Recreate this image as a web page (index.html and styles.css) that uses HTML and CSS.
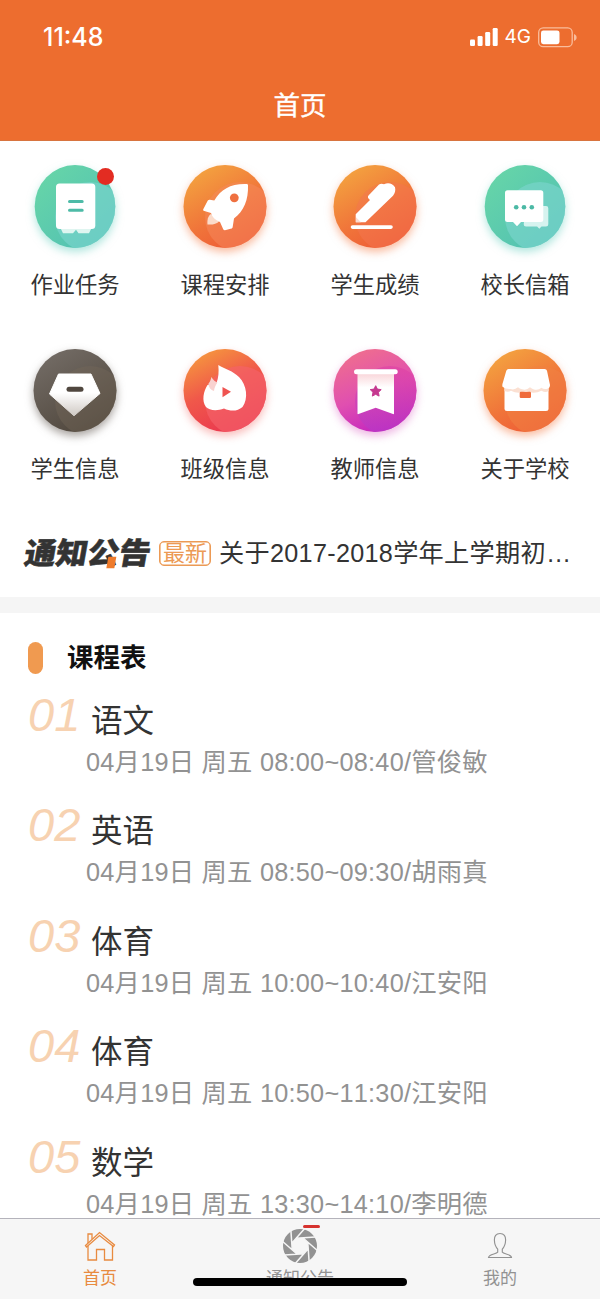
FILE: index.html
```html
<!DOCTYPE html>
<html lang="zh-CN">
<head>
<meta charset="utf-8">
<title>首页</title>
<link rel="stylesheet" href="styles.css">
</head>
<body>
<svg class="defs" width="0" height="0" aria-hidden="true">
  <defs>
    <linearGradient id="green" x1="0" y1="0" x2="1" y2="1"><stop offset=".1" stop-color="#66d5a8"/><stop offset="1" stop-color="#4fbdb5"/></linearGradient>
    <linearGradient id="orange" x1=".1" y1="0" x2=".7" y2="1"><stop offset="0" stop-color="#f4a940"/><stop offset=".6" stop-color="#f0743a"/><stop offset="1" stop-color="#ee5a35"/></linearGradient>
    <linearGradient id="brown" x1="0" y1="0" x2=".6" y2="1"><stop offset="0" stop-color="#77706a"/><stop offset="1" stop-color="#50473d"/></linearGradient>
    <linearGradient id="red" x1=".1" y1="0" x2=".6" y2="1"><stop offset="0" stop-color="#f6a03c"/><stop offset=".5" stop-color="#f0584a"/><stop offset="1" stop-color="#ea3650"/></linearGradient>
    <linearGradient id="pink" x1=".2" y1="0" x2=".6" y2="1"><stop offset="0" stop-color="#f0708c"/><stop offset=".55" stop-color="#e04fb0"/><stop offset="1" stop-color="#c223c0"/></linearGradient>
    <linearGradient id="violet" x1=".7" y1="0" x2=".5" y2="1"><stop offset="0" stop-color="#e040a4"/><stop offset="1" stop-color="#b43cc8"/></linearGradient>
    <linearGradient id="fade" x1="0" y1="0" x2="0" y2="1"><stop offset=".45" stop-color="#fff"/><stop offset="1" stop-color="#cfc9c4"/></linearGradient>
    <linearGradient id="shade" x1="0" y1="0" x2="0" y2="1"><stop offset="0" stop-color="#f9d4d8"/><stop offset=".35" stop-color="#fff"/></linearGradient>
    <clipPath id="disc"><circle cx="42" cy="41.5" r="41.5"/></clipPath>
    <clipPath id="disc-green"><ellipse cx="42" cy="41.5" rx="40.3" ry="41.5"/></clipPath>
  </defs>
</svg>
<div class="screen">
  <header class="header">
    <div class="status">
      <span class="time">11:48</span>
      <span class="signals">
        <svg width="28" height="18" viewBox="0 0 28 18" fill="#fff"><rect x="0" y="11.5" width="5" height="6.5" rx="1.2"/><rect x="7.6" y="8" width="5" height="10" rx="1.2"/><rect x="15.2" y="4" width="5" height="14" rx="1.2"/><rect x="22.7" y="0" width="5" height="18" rx="1.2"/></svg>
        <span class="network">4G</span>
        <svg width="39" height="21" viewBox="0 0 39 21"><rect x=".7" y=".9" width="33.5" height="18.8" rx="4.5" fill="none" stroke="#f9bd9c" stroke-width="1.3"/><rect x="3" y="3.4" width="18.5" height="13.8" rx="2.4" fill="#fff"/><path d="M36 7v7c2-.8 2.600-2 2.600-3.500S38 7.800 36 7z" fill="#f9bd9c"/></svg>
      </span>
    </div>
    <h1 class="title">首页</h1>
  </header>
  <main class="content">
    <nav class="grid">
      <a class="entry green">
        <svg class="icon" viewBox="0 0 84 84"><g clip-path="url(#disc-green)"><rect width="84" height="84" fill="url(#green)"/><circle cx="57" cy="52" r="35" fill="#7dd5cf" opacity=".6"/></g><path d="M27 62l3 6.300h10l3-3.500 2.500 3.500H56l3-6.300z" fill="#dff5f0"/><rect x="23" y="18.500" width="39.300" height="45.500" rx="3.500" fill="#fff"/><path d="M36.500 36.400h12.700M36.500 45.300h12.700" stroke="#4dbba7" stroke-width="3" stroke-linecap="round"/></svg>
        <i class="dot"></i><span>作业任务</span>
      </a>
      <a class="entry orange">
        <svg class="icon" viewBox="0 0 84 84"><g clip-path="url(#disc)"><rect width="84" height="84" fill="url(#orange)"/><circle cx="57" cy="52" r="35" fill="#f58a5d" opacity=".5"/></g><path d="M28 49c-3 2-4 6-3.500 10.500 5 .5 9-.5 12-3.500z" fill="#fbdccb"/><path d="M65 20C65.500 35 61 46 51 53.500L49.600 62.500q-.6 1.200-2 1.200L42 65.300q-1.500 0-2-1.500L37 57C32 55 29 52 28 48L20.500 45.700q-.8-.7 0-1.900l4.300-8.200q.8-1 2-.8l4.500.7C38 24 48 18.500 63.500 19q1.400 0 1.500 1z" fill="#fff"/><circle cx="51.300" cy="32.800" r="4.400" fill="#ef7040"/></svg>
        <span>课程安排</span>
      </a>
      <a class="entry orange">
        <svg class="icon" viewBox="0 0 84 84"><g clip-path="url(#disc)"><rect width="84" height="84" fill="url(#orange)"/><circle cx="57" cy="52" r="35" fill="#f4764f" opacity=".5"/></g><path d="M22.700 57.300v-8L37 35l-1.500-1.500c-.8-.8-.8-2 0-3L46 19.600c1.500-1.200 3.500-1.200 5-.3 4-2 8.500-1 11 3 .8 3 0 6-2 8.500L32.500 57.300z" fill="#fff"/><path d="M23 57.300v-5l5 5z" fill="#fbdcd0"/><path d="M19.500 62.100h38.500" stroke="#fff" stroke-width="3.600" stroke-linecap="round"/></svg>
        <span>学生成绩</span>
      </a>
      <a class="entry green">
        <svg class="icon" viewBox="0 0 84 84"><g clip-path="url(#disc-green)"><rect width="84" height="84" fill="url(#green)"/><circle cx="57" cy="52" r="35" fill="#7dd5cf" opacity=".6"/></g><path d="M43 41h20q2.300 0 2.300 2.300v15.900q0 2.300-2.300 2.300h-4.500l-2.200 2.200-2.200-2.200H43q-2.300 0-2.300-2.300z" fill="#d6f3ef"/><path d="M24.500 25.300h33.300q2.500 0 2.500 2.500v26.700q0 2.500-2.500 2.500H38l-4 4.200-4-4.200h-5.500q-2.500 0-2.500-2.500V27.800q0-2.500 2.500-2.500z" fill="#fff"/><g fill="#4bb9a5"><circle cx="33.200" cy="42.200" r="2.300"/><circle cx="41" cy="42.200" r="2.300"/><circle cx="48.800" cy="42.200" r="2.300"/></g></svg>
        <span>校长信箱</span>
      </a>
      <a class="entry brown">
        <svg class="icon" viewBox="0 0 84 84"><g clip-path="url(#disc)"><rect width="84" height="84" fill="url(#brown)"/><circle cx="57" cy="52" r="35" fill="#766a5b" opacity=".4"/></g><path d="M25.500 25h32.500l9 19.500L41 66.800 16.500 45z" fill="url(#fade)" stroke="url(#fade)" stroke-linejoin="round"/><path d="M36 40.300h12" stroke="#50473f" stroke-width="5" stroke-linecap="round"/></svg>
        <span>学生信息</span>
      </a>
      <a class="entry red">
        <svg class="icon" viewBox="0 0 84 84"><g clip-path="url(#disc)"><rect width="84" height="84" fill="url(#red)"/><circle cx="57" cy="52" r="35" fill="#f4626a" opacity=".65"/></g><path d="M35.300 16C42 20 50 22 56 28c8 8 9.500 22 3.500 30-5 4.500-12 4.500-18.500 1.500-8 3-15 1.500-18-1.500-4.500-6-2.500-16 1.500-22l9-2c2-5 2.500-11 1.800-18z" fill="#fff"/><path d="M28.300 28c2 3 4 5 6.200 5.500-2 2.500-3 5-3.500 8.500-3-1-5.500-3.500-5.500-7.500 1.800-2.200 2.500-4 2.800-6.500z" fill="#f9d2d0"/><path d="M39.500 38v10.300l8.500-5.500z" fill="#ef5350"/></svg>
        <span>班级信息</span>
      </a>
      <a class="entry pink">
        <svg class="icon" viewBox="0 0 84 84"><g clip-path="url(#disc)"><rect width="84" height="84" fill="url(#pink)"/><circle cx="57" cy="52" r="35" fill="url(#violet)" opacity=".6"/></g><path d="M24.500 24H61v40.500q0 1-1 .6l-17.300-6.300-17.200 6.300q-1 .4-1-.6z" fill="url(#shade)"/><rect x="21" y="20.300" width="43.700" height="5" rx="2.500" fill="#fff"/><path d="M42.700 36.700l1.700 3.400 3.800.5-2.800 2.700.7 3.800-3.400-1.800-3.400 1.800.7-3.800-2.800-2.700 3.800-.5z" fill="#c5388f" stroke="#c5388f" stroke-linejoin="round"/></svg>
        <span>教师信息</span>
      </a>
      <a class="entry orange">
        <svg class="icon" viewBox="0 0 84 84"><g clip-path="url(#disc)"><rect width="84" height="84" fill="url(#orange)"/><circle cx="57" cy="52" r="35" fill="#f18243" opacity=".55"/></g><path d="M21.500 35h44v24.500q0 2.500-2.500 2.500H24q-2.500 0-2.500-2.500z" fill="#fff"/><path d="M21.500 38h44v4q-3 2-7-.3-8 4-15.500 0-7.500 4-15 0-3 2-6.500.3z" fill="#fbe0d2"/><path d="M25.500 20h36q2 0 2.500 1.700L67 36q0 3.500-3.500 4-3 .5-5-1.300-3.500 3-7.500 1.700-2.500-.5-4-2.100-3.500 3.500-8 2-2.500-.5-4-2-3.500 3-7.500 1.700-5 .3-8-2.200-.5-2 .3-4l3.500-12.100q.7-1.700 2.200-1.700z" fill="#fff"/><rect x="36.700" y="42.700" width="11.300" height="6.300" rx="1.200" fill="#ef6b3b"/></svg>
        <span>关于学校</span>
      </a>
    </nav>
    <section class="notice">
      <strong class="notice-logo">通知公告</strong>
      <span class="tag">最新</span>
      <span class="notice-text">关于2017-2018学年上学期初…</span>
    </section>
    <section class="schedule">
      <h2 class="heading"><span>课程表</span></h2>
      <ol class="lessons">
        <li><em>01</em><h3>语文</h3><p>04月19日 周五 08:00~08:40/管俊敏</p></li>
        <li><em>02</em><h3>英语</h3><p>04月19日 周五 08:50~09:30/胡雨真</p></li>
        <li><em>03</em><h3>体育</h3><p>04月19日 周五 10:00~10:40/江安阳</p></li>
        <li><em>04</em><h3>体育</h3><p>04月19日 周五 10:50~11:30/江安阳</p></li>
        <li><em>05</em><h3>数学</h3><p>04月19日 周五 13:30~14:10/李明德</p></li>
      </ol>
    </section>
  </main>
  <footer class="tabs">
    <a class="tab active">
      <svg width="36" height="36" viewBox="0 0 36 36" fill="none" stroke="#e88b40" stroke-width="1.300"><path d="M3.500 17.500L17.500 4.500l15 12.500-1 1.500L17.500 7.500 4.500 19z"/><path d="M6 18v14h8.500V21.500h8V32h8V17.500M6 15V6h4v5"/></svg>
      <span>首页</span>
    </a>
    <a class="tab">
      <svg width="36" height="36" viewBox="0 0 36 36"><circle cx="18" cy="18" r="17" fill="#929292"/><g transform="rotate(-4 18 18)"><path d="M14.700 10h6.600l4.700 4.700v6.600L21.300 26h-6.600L10 21.300v-6.600z" fill="#f6f6f6"/><path d="M14.700 10H34M21.300 10L35 23.700M26 14.700V34M26 21.300L12.300 35M21.300 26H2M14.700 26L1 12.300M10 21.300V2M10 14.700L23.700 1" stroke="#f6f6f6" stroke-width="1.500"/></g></svg>
      <i class="badge"></i>
      <span>通知公告</span>
    </a>
    <a class="tab">
      <svg width="36" height="36" viewBox="0 0 36 36" fill="none" stroke="#929292" stroke-width="1.150"><path d="M18 5.500c-4 0-5.800 2.500-5.600 6.800.1 3.700 1.300 6.700 3.300 8.900v3c-1.500 2-9 1.800-9.200 5.300h23c-.2-3.500-7.700-3.300-9.200-5.300v-3c2-2.200 3.200-5.200 3.300-8.900.2-4.300-1.600-6.800-5.600-6.800z"/></svg>
      <span>我的</span>
    </a>
    <i class="home-bar"></i>
  </footer>
</div>
</body>
</html>
```
FILE: styles.css
```css
* { box-sizing: border-box; }
body, h1, h2, h3, p, ol { margin: 0; padding: 0; }
body {
  background: #fff;
  color: #333;
  font-family: "Liberation Sans", "Noto Sans CJK SC", sans-serif;
  font-kerning: none;
}
.defs { display: block; position: absolute; }
.screen {
  width: 600px;
  height: 1299px;
  overflow: hidden;
  display: flex;
  flex-direction: column;
}
.header {
  flex: none;
  height: 141px;
  background: #ed6d2f;
  color: #fff;
  border-bottom: 1px solid #d8743f;
}
.status {
  height: 74px;
  padding: 0 23px 0 43px;
  display: flex;
  align-items: center;
  justify-content: space-between;
}
.time { font: 500 25px/30px Inter, sans-serif; }
.signals { display: flex; align-items: center; }
.network { font: 400 19px/24px Inter, sans-serif; margin: 0 7px; }
.title {
  font-size: 26.5px;
  line-height: 65px;
  font-weight: 400;
  text-align: center;
  -webkit-text-stroke: .4px #fff;
}
.content { flex: 1; min-height: 0; overflow: hidden; }

.grid {
  display: grid;
  grid-template-columns: repeat(4, 150px);
  grid-auto-rows: 184px;
  height: 368px;
}
.entry {
  position: relative;
  display: flex;
  flex-direction: column;
  align-items: center;
  padding-top: 24px;
  font-size: 22.3px;
  line-height: 30px;
}
.icon { width: 84px; height: 84px; margin-bottom: 22px; }
.green .icon { filter: drop-shadow(0 4px 4px #63cdbd80); }
.orange .icon { filter: drop-shadow(0 4px 4px #f3784080); }
.brown .icon { filter: drop-shadow(0 4px 4px #51484080); }
.red .icon { filter: drop-shadow(0 4px 4px #f05a5566); }
.pink .icon { filter: drop-shadow(0 4px 4px #d448b866); }
.dot {
  position: absolute;
  top: 27px;
  left: 97px;
  width: 17px;
  height: 17px;
  border-radius: 50%;
  background: #e32c22;
}

.notice {
  height: 88px;
  display: flex;
  align-items: center;
  padding: 0 0 0 25px;
  white-space: nowrap;
}
.notice-logo {
  position: relative;
  width: 126px;
  padding-top: 2px;
  font-size: 31.5px;
  line-height: 36px;
  font-weight: 900;
  -webkit-text-stroke: .6px #333;
  transform: skewX(-10deg) scaleY(.95);
}
.notice-logo::after {
  content: "";
  position: absolute;
  right: 34px;
  bottom: 3px;
  width: 8px;
  height: 12px;
  background: #ee7b2c;
}
.tag {
  width: 52px;
  height: 25px;
  margin: 0 8px;
  border: 1px solid #ec9a55;
  box-shadow: inset 0 0 0 .6px #ec9a55;
  border-radius: 5px;
  color: #ec9a55;
  font-size: 22px;
  line-height: 24px;
  text-align: center;
}
.notice-text { font-size: 25.2px; line-height: 36px; letter-spacing: .3px; }

.schedule { border-top: 16px solid #f5f5f5; padding-top: 24px; }
.heading {
  display: flex;
  align-items: center;
  height: 41px;
  gap: 24px;
  padding-left: 28px;
  color: #111;
  font-size: 26.5px;
  line-height: 36px;
  font-weight: 700;
}
.heading span { padding-top: 1px; }
.heading::before {
  content: "";
  width: 15px;
  height: 32px;
  border-radius: 8px;
  background: #f09a50;
}
.lessons { list-style: none; padding: 12px 0 0 28px; }
.lessons li {
  height: 110.4px;
  display: grid;
  grid-template-columns: 63px 1fr;
  grid-template-rows: 57px 30px;
}
.lessons em {
  color: #f7d2b1;
  font-size: 47px;
  line-height: 50px;
}
.lessons h3 { font-size: 31.5px; line-height: 62px; font-weight: 400; }
.lessons p {
  grid-column: 1 / 3;
  padding-left: 58px;
  color: #929292;
  font-size: 25.3px;
  line-height: 30px;
  letter-spacing: .24px;
  white-space: nowrap;
}

.tabs {
  position: relative;
  flex: none;
  height: 81px;
  display: grid;
  grid-template-columns: repeat(3, 200px);
  background: #f6f6f6;
  border-top: 1px solid #b4b3bb;
}
.tab {
  position: relative;
  display: flex;
  flex-direction: column;
  align-items: center;
  padding-top: 9px;
  gap: 3px;
  color: #929292;
  font-size: 17px;
  line-height: 24px;
}
.active { color: #e88b40; }
.badge {
  position: absolute;
  left: 103px;
  top: 6px;
  width: 17px;
  height: 3px;
  border-radius: 2px;
  background: #d6332f;
}
.home-bar {
  position: absolute;
  left: 193px;
  top: 59px;
  width: 214px;
  height: 8px;
  border-radius: 4px;
  background: #000;
}
```
